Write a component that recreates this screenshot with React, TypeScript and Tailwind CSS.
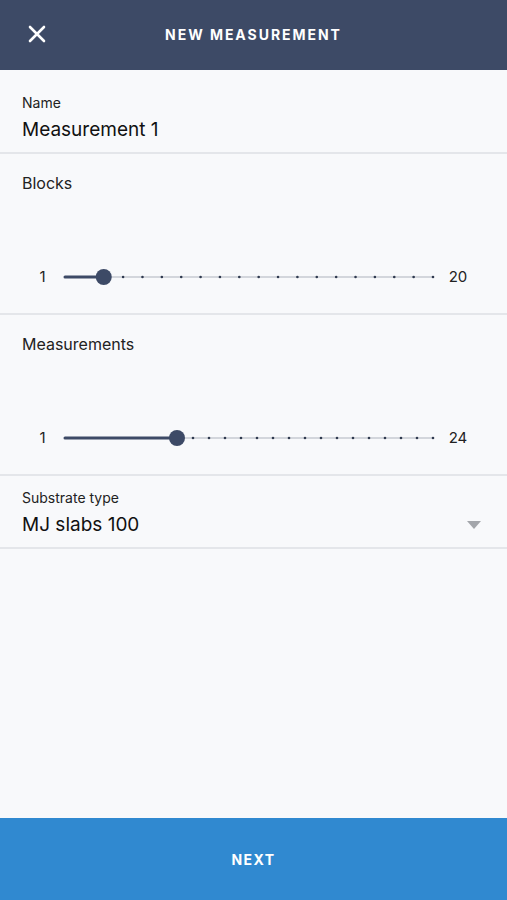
import React from "react";

function Slider({ min, max, value }: { min: number; max: number; value: number }) {
  const w = 372;
  const x0 = 2;
  const x1 = w - 2;
  const n = max - min;
  const step = (x1 - x0) / n;
  const tx = x0 + (value - min) * step;
  const ticks = [];
  for (let i = value - min + 1; i <= n; i++) {
    ticks.push(<circle key={i} cx={x0 + i * step} cy={10} r={1.3} fill="#2f3a4f" />);
  }
  return (
    <div className="flex items-center px-[22px]">
      <div className="w-[41px] text-center text-[15px] text-[#222]">{min}</div>
      <svg width={w} height={20} className="shrink-0">
        <line x1={x0} y1={10} x2={x1} y2={10} stroke="#d3d6dc" strokeWidth={2} />
        <line x1={x0} y1={10} x2={tx} y2={10} stroke="#3d4a66" strokeWidth={3} strokeLinecap="round" />
        {ticks}
        <circle cx={tx} cy={10} r={8} fill="#3d4a66" />
      </svg>
      <div className="w-[46px] text-center text-[15px] text-[#222]">{max}</div>
    </div>
  );
}

export default function App() {
  return (
    <div
      className="w-[507px] h-[900px] flex flex-col bg-[#f8f9fb]"
      style={{ fontFamily: "Inter, 'Liberation Sans', sans-serif" }}
    >
      <header className="h-[70px] shrink-0 bg-[#3d4a66] relative flex items-center justify-center">
        <svg className="absolute left-[28px] top-[25px]" width="18" height="18" viewBox="0 0 18 18">
          <path d="M2 2L16 16M16 2L2 16" stroke="#fff" strokeWidth="2.6" strokeLinecap="round" />
        </svg>
        <h1 className="text-white text-[14px] font-bold tracking-[0.14em] mb-[2px]">NEW MEASUREMENT</h1>
      </header>

      <section className="h-[84px] shrink-0 border-b-2 border-[#e4e6ea] px-[22px] pt-[24px]">
        <div className="text-[14px] leading-[18px] text-[#222]">Name</div>
        <div className="text-[19px] leading-[26px] mt-[5px] text-[#111]">Measurement 1</div>
      </section>

      <section className="h-[161px] shrink-0 border-b-2 border-[#e4e6ea] flex flex-col">
        <div className="px-[22px] pt-[19px] text-[16px] leading-[20px] text-[#222]">Blocks</div>
        <div className="mt-[73px]">
          <Slider min={1} max={20} value={3} />
        </div>
      </section>

      <section className="h-[161px] shrink-0 border-b-2 border-[#e4e6ea] flex flex-col">
        <div className="px-[22px] pt-[19px] text-[16px] leading-[20px] text-[#222]">Measurements</div>
        <div className="mt-[73px]">
          <Slider min={1} max={24} value={8} />
        </div>
      </section>

      <section className="h-[73px] shrink-0 border-b-2 border-[#e4e6ea] px-[22px] pt-[13px] flex flex-col">
        <div className="text-[14px] leading-[18px] text-[#222]">Substrate type</div>
        <div className="flex items-center justify-between mt-[5px]">
          <div className="text-[19px] leading-[26px] text-[#111]">MJ slabs 100</div>
          <svg width="14" height="8" viewBox="0 0 14 8" className="mr-[4px]">
            <path d="M0 0H14L7 8Z" fill="#a3a6ab" />
          </svg>
        </div>
      </section>

      <div className="flex-1" />

      <button className="h-[82px] shrink-0 bg-[#3089d0] text-white text-[14px] font-bold tracking-[0.1em]">
        NEXT
      </button>
    </div>
  );
}
